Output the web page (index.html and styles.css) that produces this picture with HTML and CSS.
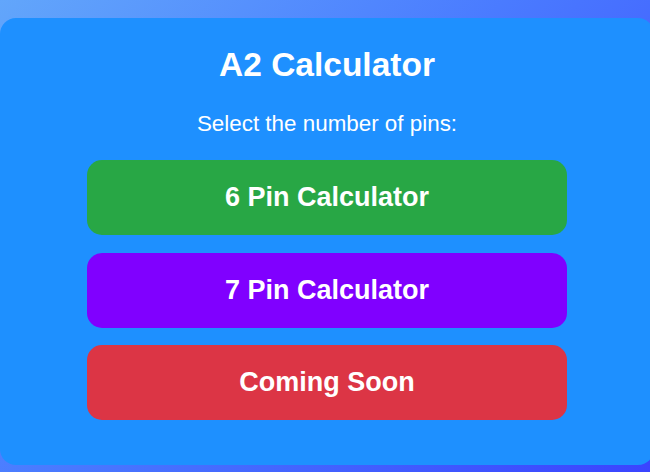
FILE: index.html
```html
<!DOCTYPE html>
<html lang="en">
<head>
<meta charset="utf-8">
<title>A2 Calculator</title>
<link rel="stylesheet" href="styles.css">
</head>
<body>
<div class="card">
  <h1 class="title">A2 Calculator</h1>
  <p class="subtitle">Select the number of pins:</p>
  <div class="buttons">
    <button class="btn btn-green">6 Pin Calculator</button>
    <button class="btn btn-purple">7 Pin Calculator</button>
    <button class="btn btn-red">Coming Soon</button>
  </div>
</div>
</body>
</html>
```
FILE: styles.css
```css
html, body {
  margin: 0;
  padding: 0;
}
body {
  width: 650px;
  height: 472px;
  overflow: hidden;
  background: linear-gradient(135deg, #62a6fb 0%, #4a7bff 45%, #3a44ff 100%);
  font-family: "Liberation Sans", Arial, sans-serif;
  padding-top: 18px;
  box-sizing: border-box;
}
.card {
  width: 654px;
  box-sizing: border-box;
  background: #1e90ff;
  border-radius: 16px;
  padding: 28px 87px 45px;
  color: #fff;
  text-align: center;
}
.title {
  margin: 0;
  font-size: 33.5px;
  line-height: 38px;
  font-weight: bold;
}
.subtitle {
  margin: 27px 0 0;
  font-size: 22.4px;
  line-height: 25px;
}
.buttons {
  margin-top: 24px;
  display: flex;
  flex-direction: column;
  gap: 17.5px;
}
.btn {
  height: 75px;
  border: none;
  border-radius: 15px;
  color: #fff;
  font-family: "Liberation Sans", Arial, sans-serif;
  font-size: 27px;
  font-weight: bold;
  padding: 0;
}
.btn-green { background: #28a745; }
.btn-purple { background: #8000ff; }
.btn-red { background: #dc3545; }
```
